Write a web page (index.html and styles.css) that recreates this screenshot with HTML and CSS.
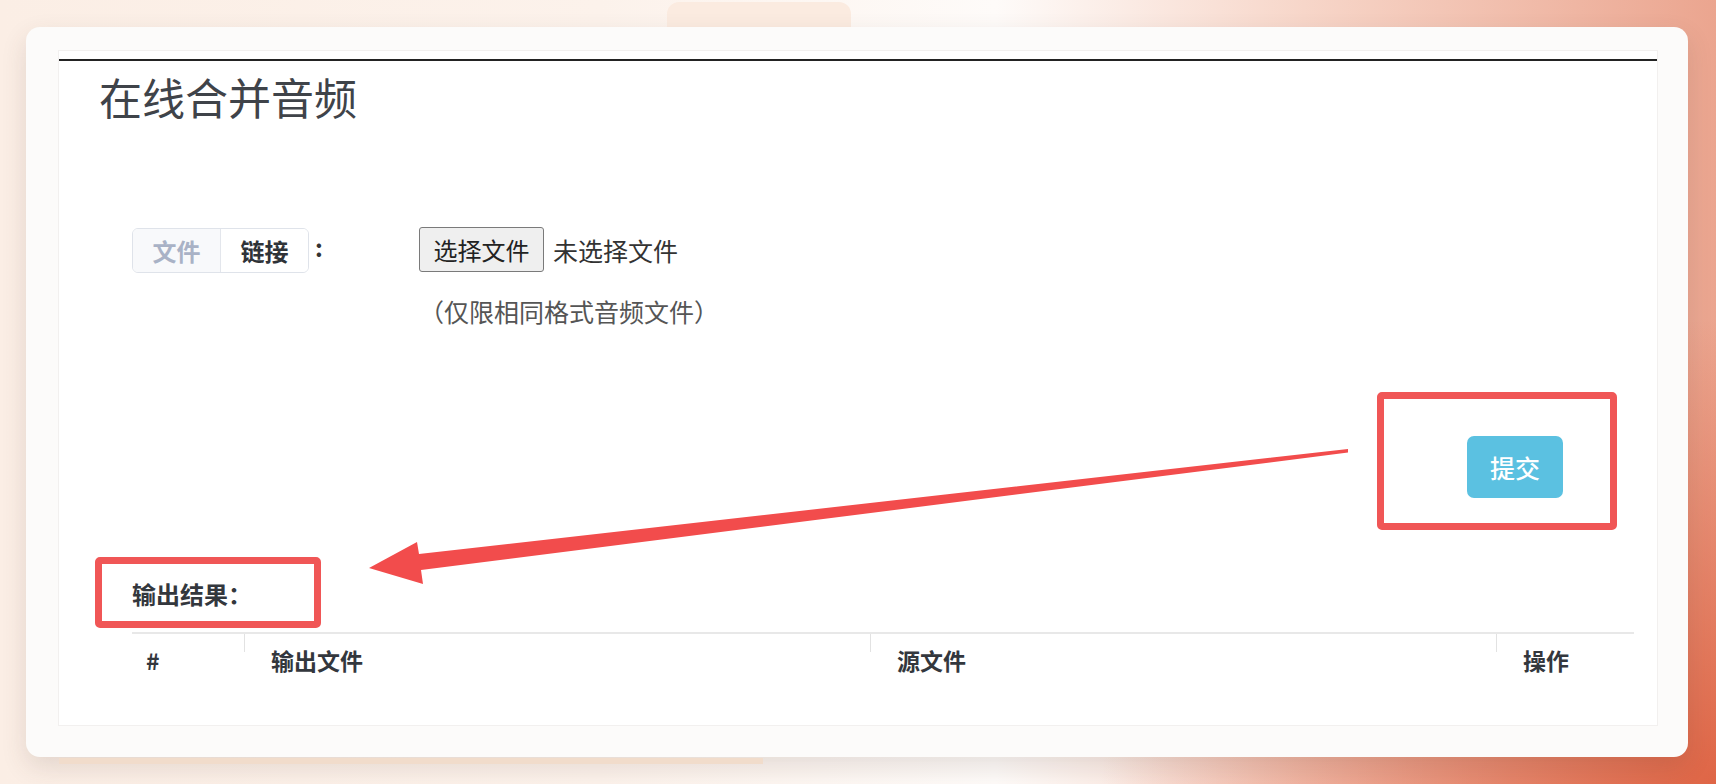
FILE: index.html
```html
<!DOCTYPE html>
<html lang="zh-CN">
<head>
<meta charset="utf-8">
<title>在线合并音频</title>
<link rel="stylesheet" href="styles.css">
</head>
<body>
<div class="ghost-tab"></div>
<div class="card">
  <div class="panel">
    <div class="rule"></div>
    <h1 class="title">在线合并音频</h1>
    <div class="form-grid">
      <div class="label-cell">
        <div class="toggle">
          <span class="seg seg-off">文件</span>
          <span class="seg seg-on">链接</span>
        </div>
        <span class="colon">:</span>
      </div>
      <div class="file-cell">
        <button class="file-btn" type="button">选择文件</button>
        <span class="file-none">未选择文件</span>
      </div>
      <div></div>
      <div class="hint">（仅限相同格式音频文件）</div>
    </div>
    <div class="submit-row">
      <button class="submit-btn" type="button">提交</button>
    </div>
    <div class="result-label">输出结果：</div>
    <div class="table">
      <div class="th th-num">#</div>
      <div class="th th-sep">输出文件</div>
      <div class="th th-sep">源文件</div>
      <div class="th th-sep">操作</div>
    </div>
  </div>
</div>
<div class="under-strip"></div>

<div class="mark mark-submit"></div>
<div class="mark mark-result"></div>
<svg class="arrow" width="1716" height="784" viewBox="0 0 1716 784">
  <polygon fill="#f24c4c" points="369,568 417,542 419,554 1348,449 1348,452.5 421,570 423,584"/>
</svg>
</body>
</html>
```
FILE: styles.css
```css
html, body {
  margin: 0;
  padding: 0;
}
body {
  width: 1716px;
  height: 784px;
  overflow: hidden;
  position: relative;
  font-family: "Noto Sans CJK SC", "Noto Sans", sans-serif;
  background:
    radial-gradient(ellipse 820px 620px at 100% 100%, rgba(222, 98, 66, 0.95), rgba(222, 98, 66, 0) 75%),
    linear-gradient(90deg, #fbeee5 0%, #fcf2eb 35%, #fefbf9 58%, #f7d6c9 76%, #eba58f 100%);
}
.ghost-tab {
  margin: 2px 0 0 667px;
  width: 184px;
  height: 25px;
  border-radius: 12px 12px 0 0;
  background: #fbebe0;
}
.card {
  margin-left: 26px;
  width: 1662px;
  height: 730px;
  box-sizing: border-box;
  padding: 23px 30px 31px 32px;
  border-radius: 14px;
  background: #fcfbfa;
  box-shadow: 0 10px 26px rgba(80, 60, 50, 0.14);
}
.panel {
  height: 100%;
  box-sizing: border-box;
  background: #ffffff;
  border: 1px solid #f2f0ef;
  display: flex;
  flex-direction: column;
}
.rule {
  margin-top: 8px;
  height: 2px;
  background: #232323;
}
.title {
  margin: 10px 0 0 40px;
  font-size: 43px;
  line-height: 50px;
  font-weight: 400;
  color: #3f4349;
}
.form-grid {
  margin-top: 106px;
  padding-left: 73px;
  display: grid;
  grid-template-columns: 287px 1fr;
  row-gap: 20px;
}
.label-cell {
  display: flex;
  align-items: flex-start;
}
.toggle {
  display: flex;
  height: 45px;
  margin-top: 1px;
  box-sizing: border-box;
  border: 1px solid #dfe3ea;
  border-radius: 6px;
  overflow: hidden;
}
.seg {
  width: 87px;
  display: flex;
  align-items: center;
  justify-content: center;
  font-size: 24px;
  font-weight: 700;
}
.seg-off {
  background: #f8f9fb;
  color: #a9b2c6;
}
.seg-on {
  border-left: 1px solid #e3e6ec;
  color: #2f3338;
  background: #ffffff;
}
.colon {
  margin-left: 6px;
  font-size: 24px;
  font-weight: 700;
  line-height: 40px;
  color: #333;
}
.file-cell {
  display: flex;
  align-items: center;
  height: 45px;
}
.file-btn {
  width: 125px;
  height: 45px;
  box-sizing: border-box;
  padding: 0;
  border: 1px solid #7a7a7a;
  border-radius: 3px;
  background: #efefef;
  font-family: inherit;
  font-size: 24px;
  color: #222;
}
.file-none {
  margin-left: 9px;
  font-size: 25px;
  color: #333;
}
.hint {
  font-size: 25px;
  line-height: 36px;
  color: #555;
}
.submit-row {
  margin-top: 107px;
  display: flex;
  justify-content: flex-end;
  padding-right: 94px;
}
.submit-btn {
  width: 96px;
  height: 62px;
  border: none;
  border-radius: 7px;
  background: #5bc1e1;
  color: #fff;
  font-family: inherit;
  font-size: 25px;
  font-weight: 500;
}
.result-label {
  margin-top: 79px;
  padding-left: 73px;
  font-size: 24px;
  line-height: 34px;
  font-weight: 700;
  color: #33373d;
}
.table {
  margin: 21px 0 0 73px;
  width: 1502px;
  border-top: 2px solid #e8e8e8;
  display: grid;
  grid-template-columns: 112px 626px 626px 138px;
}
.th {
  padding-top: 9px;
  font-size: 23px;
  line-height: 34px;
  font-weight: 700;
  color: #33373d;
}
.th-num {
  padding-left: 14px;
}
.th-sep {
  padding-left: 27px;
  background: linear-gradient(#e2e2e2, #e2e2e2) left top / 1px 18px no-repeat;
}
.under-strip {
  margin: 1px 0 0 59px;
  width: 704px;
  height: 6px;
  background: #f1dccb;
}
.mark {
  position: absolute;
  box-sizing: border-box;
  border: 7px solid #f05656;
  border-radius: 5px;
}
.mark-submit {
  left: 1377px;
  top: 392px;
  width: 240px;
  height: 138px;
}
.mark-result {
  left: 95px;
  top: 557px;
  width: 226px;
  height: 71px;
}
.arrow {
  position: absolute;
  left: 0;
  top: 0;
  pointer-events: none;
}
```
